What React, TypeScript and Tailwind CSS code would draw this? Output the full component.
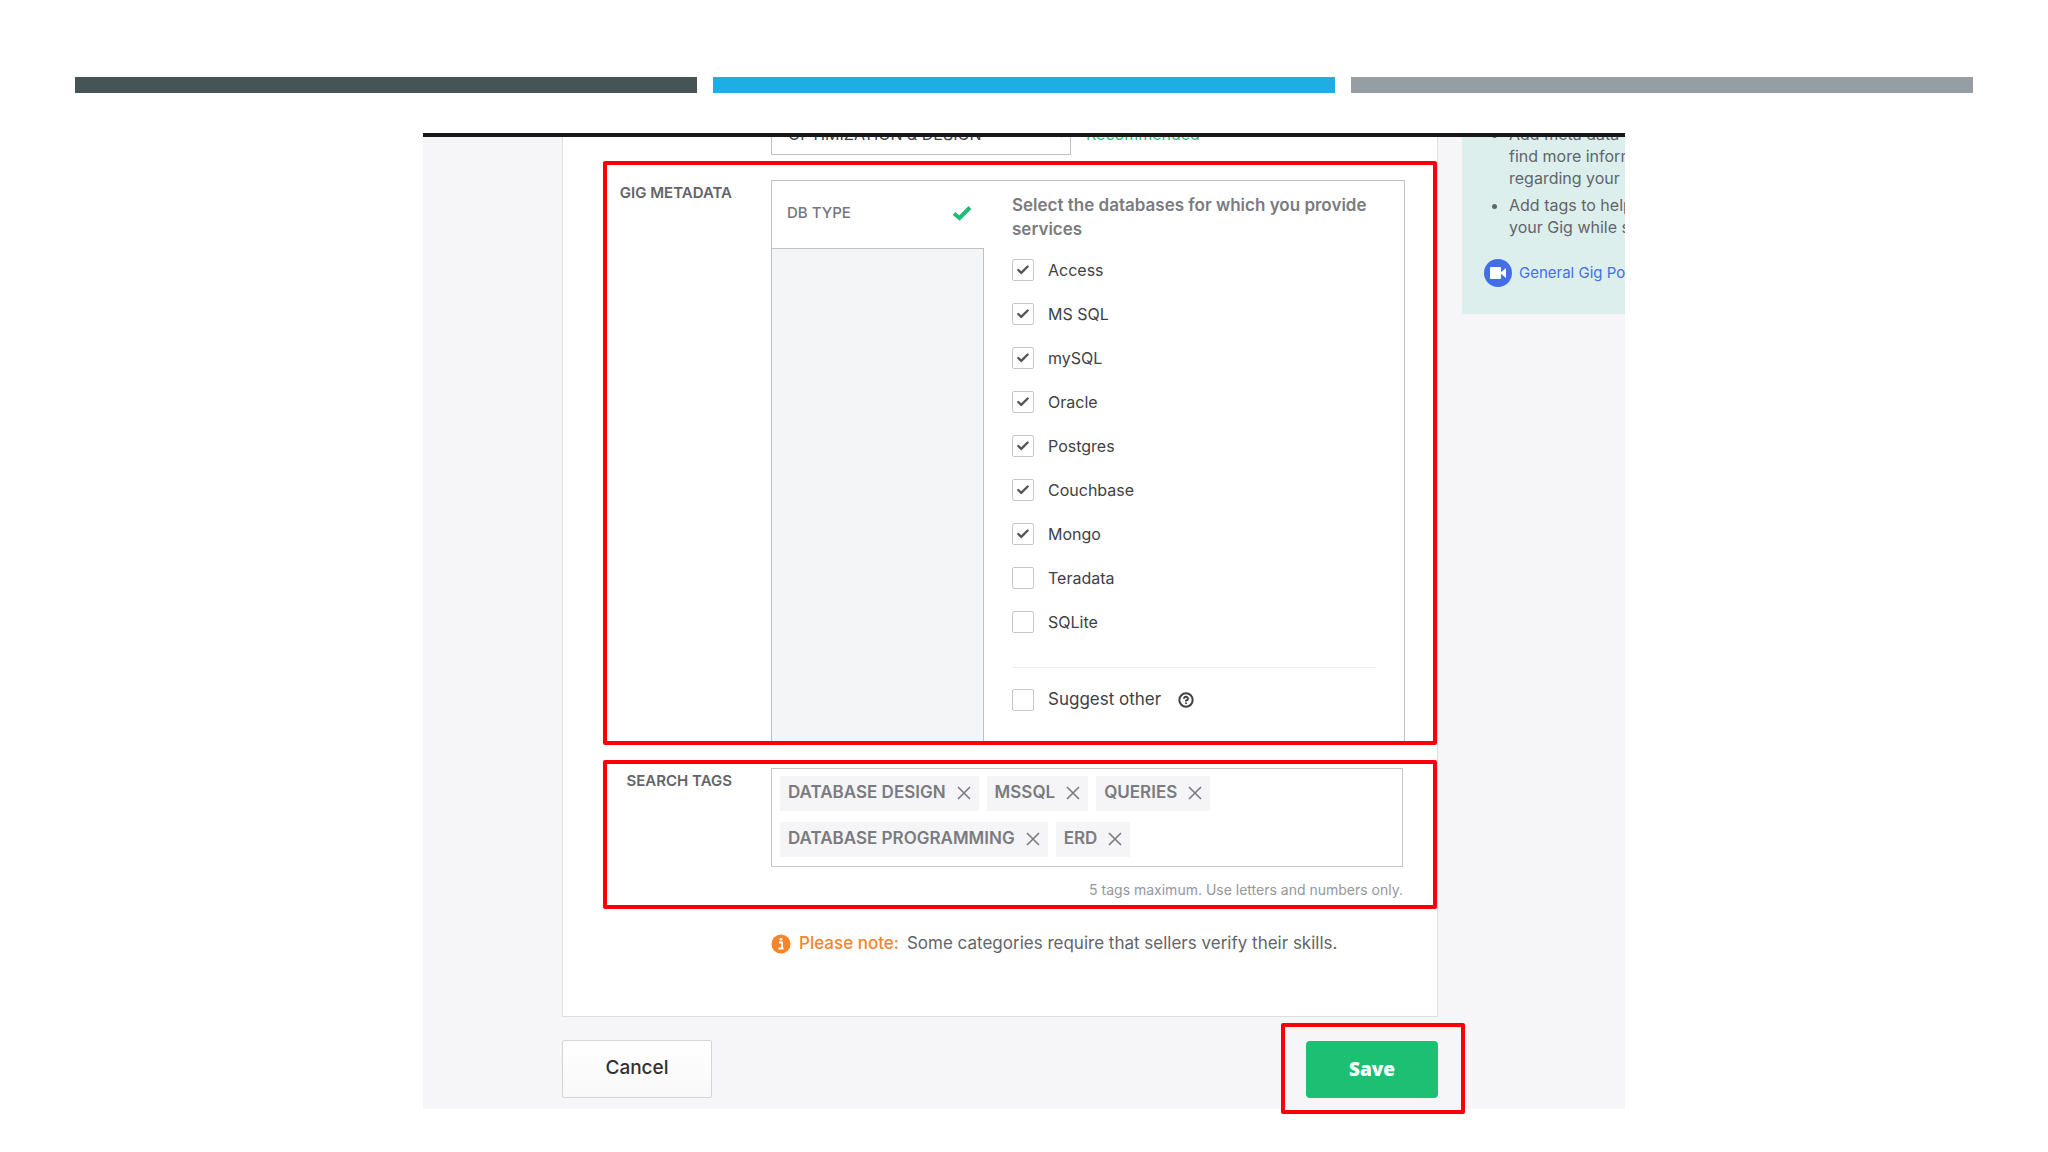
import { Check, CircleHelp } from 'lucide-react';

const databases = [
  { name: 'Access', checked: true },
  { name: 'MS SQL', checked: true },
  { name: 'mySQL', checked: true },
  { name: 'Oracle', checked: true },
  { name: 'Postgres', checked: true },
  { name: 'Couchbase', checked: true },
  { name: 'Mongo', checked: true },
  { name: 'Teradata', checked: false },
  { name: 'SQLite', checked: false },
];

const tags = ['DATABASE DESIGN', 'MSSQL', 'QUERIES', 'DATABASE PROGRAMMING', 'ERD'];

function Checkbox({ label, checked = false, large = false }: { label: string; checked?: boolean; large?: boolean }) {
  return (
    <label className={`flex h-[22px] items-center gap-[14px] text-[#404145] ${large ? 'text-[17px]' : 'text-base'}`}>
      <span className="grid size-[22px] place-items-center">
        <input
          type="checkbox"
          defaultChecked={checked}
          className="peer col-start-1 row-start-1 size-[22px] appearance-none rounded-[2px] border border-[#c5c6c9] bg-white"
        />
        <Check
          className="pointer-events-none invisible col-start-1 row-start-1 size-[14px] text-[#555] peer-checked:visible"
          strokeWidth={4}
          aria-hidden="true"
        />
      </span>
      {label}
    </label>
  );
}

function MetadataPanel() {
  return (
    <div className="flex min-h-[561px] flex-1 border border-b-0 border-[#c0c1c5]">
      <div className="flex w-[212px] flex-col">
        <button
          type="button"
          className="flex h-[68px] items-center justify-between border-b border-[#c0c1c5] pr-3 pb-[3px] pl-[15px] text-[15px] font-medium text-[#74767e]"
        >
          DB TYPE
          <svg viewBox="0 0 20 16" className="h-4 w-5" aria-hidden="true">
            <path d="M2 8.5 7.5 13 18 2.5" fill="none" stroke="#22ba78" strokeWidth="4" />
          </svg>
        </button>
        <div className="flex-1 border-r border-[#c0c1c5] bg-[#f4f5f7]" />
      </div>

      <fieldset className="flex-1 pt-3 pr-7 pl-7">
        <legend className="float-left mb-[18px] text-[17px] leading-6 font-semibold text-[#7a7b80]">
          Select the databases for which you provide services
        </legend>
        <div className="clear-both flex flex-col gap-[22px]">
          {databases.map((db) => (
            <Checkbox key={db.name} label={db.name} checked={db.checked} />
          ))}
        </div>
        <hr className="mt-[34px] mb-[21px] border-[#ededef]" />
        <div className="flex items-center gap-[17px]">
          <Checkbox label="Suggest other" large />
          <CircleHelp className="size-4 text-[#404145]" strokeWidth={3} aria-label="Help" />
        </div>
      </fieldset>
    </div>
  );
}

function SearchTags() {
  return (
    <div className="flex-1">
      <div className="flex flex-wrap gap-x-2 gap-y-[11px] border border-[#c5c6c9] px-2 pt-[7px] pb-[9px]">
        {tags.map((tag) => (
          <span
            key={tag}
            className="flex h-[35px] items-center gap-[11px] bg-[#f5f5f7] px-2 pb-[2px] text-[17px] font-semibold text-[#7a7b80]"
          >
            {tag}
            <button type="button" aria-label={`Remove ${tag}`}>
              <svg viewBox="0 0 14 14" className="size-[14px]" aria-hidden="true">
                <path d="M1 1 13 13M13 1 1 13" fill="none" stroke="currentColor" strokeWidth="1.6" />
              </svg>
            </button>
          </span>
        ))}
      </div>
      <p className="mt-[11px] pb-[3px] text-right text-sm leading-6 text-[#95979d]">
        5 tags maximum. Use letters and numbers only.
      </p>
    </div>
  );
}

function Tips() {
  return (
    <aside className="min-w-0 flex-1 overflow-hidden">
      <div className="h-[177px] overflow-hidden bg-[#dcefed] pl-[22px] text-base leading-[22px] whitespace-nowrap text-[#62646a]">
        <ul className="-mt-[14px] list-disc space-y-[5px] pl-[25px]">
          <li>
            Add meta data
            <br />
            find more inform
            <br />
            regarding your G
          </li>
          <li>
            Add tags to help
            <br />
            your Gig while s
          </li>
        </ul>
        <a href="#" className="mt-[21px] flex items-center gap-[7px] text-[15px] text-[#446ee7]">
          <span className="grid size-7 shrink-0 place-items-center rounded-full bg-[#446ee7]">
            <svg viewBox="0 0 16 12" className="h-3 w-4 fill-white" aria-hidden="true">
              <rect width="11" height="12" rx="1" />
              <path d="M10 6 16 1v10z" />
            </svg>
          </span>
          General Gig Po
        </a>
      </div>
    </aside>
  );
}

export default function App() {
  return (
    <main className="min-h-screen bg-white px-[75px] pt-[77px] pb-[43px] font-['Inter',sans-serif]">
      <div className="grid grid-cols-3 gap-4">
        <div className="h-4 bg-[#465455]" />
        <div className="h-4 bg-[#1caee4]" />
        <div className="h-4 bg-[#949ea3]" />
      </div>

      <section className="mx-auto mt-10 flex max-w-[1202px] gap-6 overflow-x-clip border-t-4 border-[#18181b] bg-[#f6f5f7] pl-[139px]">
        <form className="w-[876px] shrink-0">
          <div className="border border-t-0 border-[#dddde0] bg-white pb-[60px] pl-10">
            {/* Only the bottom edge of the service type row shows */}
            <div className="flex h-[18px] items-end gap-[15px] overflow-hidden pl-[168px]">
              <select
                aria-label="Service type"
                className="h-[42px] w-[300px] shrink-0 border border-[#c0c1c5] bg-white px-3 text-base text-[#404145]"
              >
                <option>OPTIMIZATION &amp; DESIGN</option>
              </select>
              <span className="h-[34px] shrink-0 text-base leading-[26px] text-[#1dbf73]">Recommended</span>
            </div>

            <div className="mt-[6px] flex gap-[39px] rounded-[2px] border-4 border-[#fb0007] pt-[15px] pr-7">
              <h2 className="w-[125px] pt-px text-right text-[15px] leading-6 font-semibold text-[#62646a]">GIG METADATA</h2>
              <MetadataPanel />
            </div>

            <div className="mt-[15px] flex gap-[39px] rounded-[2px] border-4 border-[#fb0007] pt-1 pr-[30px]">
              <h2 className="w-[125px] pt-px text-right text-[15px] leading-6 font-semibold text-[#62646a]">SEARCH TAGS</h2>
              <SearchTags />
            </div>

            <p className="mt-[22px] flex items-center gap-2 pl-[168px] text-[17px] leading-[25px] text-[#62646a]">
              <svg viewBox="0 0 20 20" className="size-5" aria-hidden="true">
                <circle cx="10" cy="10" r="9.5" fill="#f5842b" />
                <path d="M8 8.5h3V14M7.5 14.5h5" fill="none" stroke="#fff" strokeWidth="2" />
                <circle cx="10" cy="5.3" r="1.4" fill="#fff" />
              </svg>
              <strong className="font-medium text-[#f5842b]">Please note:</strong>
              Some categories require that sellers verify their skills.
            </p>
          </div>

          <div className="-mr-[27px] -mb-[5px] flex items-center justify-between pt-[6px]">
            <button
              type="button"
              className="h-[58px] w-[150px] rounded-[2px] border border-[#d5d5d8] bg-linear-to-b from-white to-[#f8f8f9] text-[19px] font-medium text-[#303033]"
            >
              Cancel
            </button>
            <div className="rounded-[2px] border-4 border-[#fb0007] pt-[14px] pr-[23px] pb-3 pl-[21px]">
              <button
                type="submit"
                className="block h-[57px] w-[132px] rounded bg-[#1dbf73] font-['Open_Sans',sans-serif] text-[19px] font-extrabold text-white"
              >
                Save
              </button>
            </div>
          </div>
        </form>

        <Tips />
      </section>
    </main>
  );
}
